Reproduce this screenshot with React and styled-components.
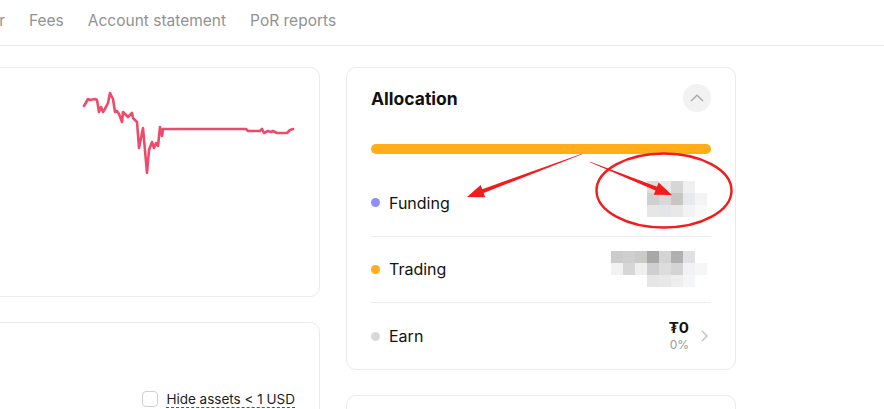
import React from 'react';
import styled, { createGlobalStyle } from 'styled-components';

const GlobalStyle = createGlobalStyle`
  html, body {
    margin: 0;
    padding: 0;
    background: #fff;
    overflow: hidden;
  }
  body {
    font-family: Inter, "Noto Sans", "Liberation Sans", sans-serif;
    color: #121212;
  }
`;

const Page = styled.div`
  position: relative;
  width: 884px;
  height: 409px;
  overflow: hidden;
`;

const Nav = styled.nav`
  height: 46px;
  border-bottom: 1px solid #ebebeb;
  display: flex;
  align-items: center;
  gap: 24px;
  padding-bottom: 5px;
  box-sizing: border-box;
  margin-left: -88px;
`;

const NavItem = styled.span`
  font-size: 15.5px;
  color: #929292;
  white-space: nowrap;
`;

const Main = styled.div`
  display: grid;
  grid-template-columns: 340px 390px;
  column-gap: 26px;
  padding-top: 21px;
  margin-left: -20px;
`;

const Column = styled.div`
  display: flex;
  flex-direction: column;
  gap: 25px;
`;

const Card = styled.div`
  border: 1px solid #ebebeb;
  border-radius: 10px;
  box-sizing: border-box;
  height: ${(p) => p.$h}px;
  background: #fff;
`;

const ChartCard = styled(Card)`
  overflow: hidden;
  svg {
    display: block;
  }
`;

const AssetsCard = styled(Card)`
  padding: 67px 24px 0;
  display: flex;
  justify-content: flex-end;
`;

const CheckRow = styled.label`
  display: flex;
  align-items: center;
  gap: 8px;
  height: 18px;
`;

const CheckBox = styled.span`
  width: 16px;
  height: 16px;
  box-sizing: border-box;
  border: 1px solid #cfcfcf;
  border-radius: 4px;
`;

const CheckText = styled.span`
  font-size: 13.5px;
  color: #1c1c1c;
  border-bottom: 1px dashed #555;
  line-height: 16px;
`;

const AllocCard = styled(Card)`
  padding: 16px 24px 0;
  display: flex;
  flex-direction: column;
`;

const Header = styled.div`
  display: flex;
  align-items: center;
  justify-content: space-between;
  height: 28px;
`;

const Title = styled.h2`
  margin: 0;
  font-size: 17.5px;
  font-weight: 700;
  color: #111;
`;

const RoundButton = styled.button`
  width: 28px;
  height: 28px;
  border: none;
  border-radius: 50%;
  background: #f2f2f2;
  display: flex;
  align-items: center;
  justify-content: center;
  padding: 0;
`;

const Bar = styled.div`
  margin-top: 32px;
  margin-bottom: 16px;
  height: 10px;
  border-radius: 5px;
  background: #ffae1a;
`;

const Row = styled.div`
  height: 66px;
  display: flex;
  align-items: center;
  justify-content: space-between;
  & + & {
    border-top: 1px solid #ebebeb;
  }
`;

const Label = styled.div`
  display: flex;
  align-items: center;
  gap: 9px;
  font-size: 16px;
  color: #121212;
`;

const Dot = styled.span`
  width: 9px;
  height: 9px;
  border-radius: 50%;
  background: ${(p) => p.$color};
`;

const Mosaic = styled.div`
  display: grid;
  grid-template-columns: repeat(${(p) => p.$cols}, 12px);
  grid-auto-rows: 12px;
  margin-right: 4px;
  margin-bottom: ${(p) => p.$shift || 0}px;
`;

const Tile = styled.span`
  background: ${(p) => p.$c};
`;

const ValueWrap = styled.div`
  display: flex;
  align-items: center;
  gap: 12px;
  margin-right: 3px;
`;

const Values = styled.div`
  display: flex;
  flex-direction: column;
  align-items: flex-end;
`;

const Amount = styled.span`
  font-size: 15px;
  font-weight: 700;
  line-height: 18px;
`;

const Percent = styled.span`
  font-size: 12px;
  color: #9a9a9a;
  line-height: 16px;
`;

const Overlay = styled.svg`
  position: absolute;
  left: 0;
  top: 0;
  pointer-events: none;
`;

const chartPoints = [
  [84, 106], [88, 99], [90, 100], [95, 99], [97, 100], [99, 112], [101, 107],
  [103, 112], [106, 107], [108, 103], [110, 93], [113, 99], [115, 112],
  [117, 111], [119, 114], [122, 122], [123, 112], [126, 115], [128, 117],
  [132, 113], [133, 118], [137, 122], [139, 148], [143, 128], [147, 173],
  [149, 150], [152, 142], [154, 148], [156, 143], [158, 146], [160, 127],
  [162, 136], [163, 129], [173, 129], [246, 129], [248, 131], [260, 131],
  [262, 129], [264, 133], [268, 131], [271, 132], [273, 131], [277, 133],
  [287, 133], [290, 130], [293, 129],
];

const fundingTiles = [
  '#dcdcdc', '#e9e9e9', '#d6d6d6', '#f0f0f2', '#ffffff',
  '#cfcfcf', '#d8d8da', '#c8c6c3', '#e8e9ec', '#f4f4f6',
  '#e6e6e6', '#e4e5e8', '#e8e8e8', '#f2f3f5', '#f9f9f9',
];

const tradingTiles = [
  '#cbcbcb', '#cfcfcf', '#cacac6', '#a8a8a8', '#d4d4d4', '#b0b0b0', '#e0e1e5', '#ffffff',
  '#f2f2f2', '#d6d6d6', '#eef0ef', '#cfcfcf', '#dcdcdc', '#d4d4d4', '#f2f2f4', '#f6f6f6',
  '#ffffff', '#ffffff', '#ffffff', '#e6e6e6', '#e8e8e8', '#eeeeee', '#f4f5f7', '#ffffff',
];

function arrowPolygon(x1, y1, x2, y2) {
  const dx = x2 - x1;
  const dy = y2 - y1;
  const len = Math.hypot(dx, dy);
  const ux = dx / len;
  const uy = dy / len;
  const nx = -uy;
  const ny = ux;
  const head = 17;
  const bx = x2 - ux * head;
  const by = y2 - uy * head;
  const p = (x, y, w) => `${x + nx * w},${y + ny * w}`;
  return [
    p(x1, y1, 0.4), p(bx, by, 2), p(bx, by, 6.5), `${x2},${y2}`,
    p(bx, by, -6.5), p(bx, by, -2), p(x1, y1, -0.4),
  ].join(' ');
}

function Allocation() {
  return (
    <AllocCard $h={303}>
      <Header>
        <Title>Allocation</Title>
        <RoundButton aria-label="collapse">
          <svg width="14" height="8" viewBox="0 0 14 8">
            <polyline points="1,7 7,1.2 13,7" fill="none" stroke="#a8a8a8" strokeWidth="1.4" />
          </svg>
        </RoundButton>
      </Header>
      <Bar />
      <Row>
        <Label><Dot $color="#8e90f7" />Funding</Label>
        <Mosaic $cols={5} $shift={7}>
          {fundingTiles.map((c, i) => <Tile key={i} $c={c} />)}
        </Mosaic>
      </Row>
      <Row>
        <Label><Dot $color="#ffae1a" />Trading</Label>
        <Mosaic $cols={8}>
          {tradingTiles.map((c, i) => <Tile key={i} $c={c} />)}
        </Mosaic>
      </Row>
      <Row>
        <Label><Dot $color="#d9d9d9" />Earn</Label>
        <ValueWrap>
          <Values>
            <Amount>₮0</Amount>
            <Percent>0%</Percent>
          </Values>
          <svg width="7" height="12" viewBox="0 0 7 12">
            <polyline points="1,1 6,6 1,11" fill="none" stroke="#bdbdbd" strokeWidth="1.3" />
          </svg>
        </ValueWrap>
      </Row>
    </AllocCard>
  );
}

export default function App() {
  return (
    <Page>
      <GlobalStyle />
      <Nav>
        <NavItem>Order center</NavItem>
        <NavItem>Fees</NavItem>
        <NavItem>Account statement</NavItem>
        <NavItem>PoR reports</NavItem>
      </Nav>
      <Main>
        <Column>
          <ChartCard $h={230}>
            <svg width="340" height="228" viewBox="-19 68 340 228">
              <polyline
                points={chartPoints.map((p) => p.join(',')).join(' ')}
                fill="none"
                stroke="#ee4b6b"
                strokeWidth="2.6"
                strokeLinejoin="round"
                strokeLinecap="round"
              />
            </svg>
          </ChartCard>
          <AssetsCard $h={120}>
            <CheckRow>
              <CheckBox />
              <CheckText>Hide assets &lt; 1 USD</CheckText>
            </CheckRow>
          </AssetsCard>
        </Column>
        <Column>
          <Allocation />
          <Card $h={120} />
        </Column>
      </Main>
      <Overlay width="884" height="409" viewBox="0 0 884 409">
        <ellipse cx="664" cy="190.5" rx="67.5" ry="37" fill="none" stroke="#f21c1c" strokeWidth="2.4" />
        <polygon points={arrowPolygon(582, 154, 467, 197)} fill="#f21c1c" />
        <polygon points={arrowPolygon(590, 162, 672, 195)} fill="#f21c1c" />
      </Overlay>
    </Page>
  );
}
